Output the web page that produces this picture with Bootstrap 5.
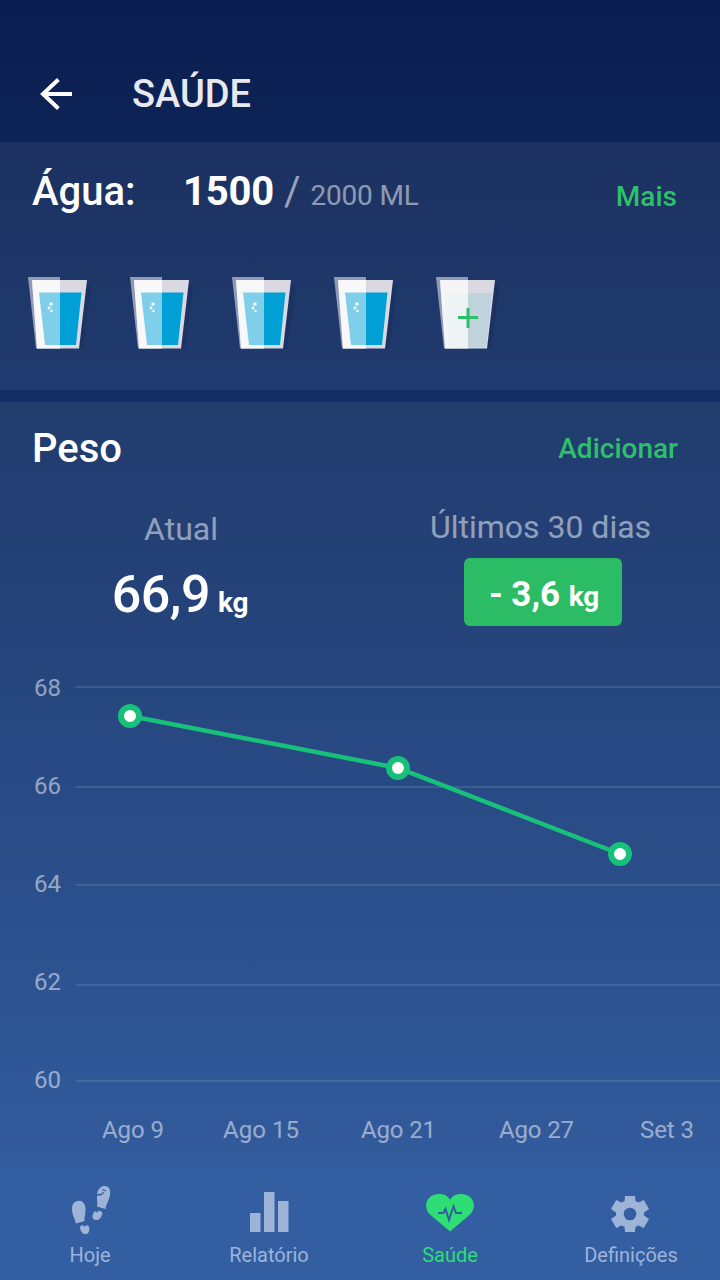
<!DOCTYPE html>
<html lang="pt">
<head>
<meta charset="utf-8">
<meta name="viewport" content="width=device-width, initial-scale=1">
<title>Saúde</title>
<link rel="stylesheet" href="https://cdn.jsdelivr.net/npm/bootstrap@5.3.0/dist/css/bootstrap.min.css">
<style>
body{font-family:Roboto,"Liberation Sans",sans-serif;width:720px;height:1280px;overflow:hidden;background:#142d66;color:#fff;line-height:1}
.app-header{height:142px;padding:46px 0 0 40px;background:linear-gradient(#0a1c50,#0e2456)}
.app-title{font-size:38px;font-weight:500;line-height:96px;margin-left:60px;opacity:.9}
.water{height:248px;margin-bottom:12px;padding:26px 43px 0 28px;background:linear-gradient(#1c3161,#203b6f)}
.weight{height:766px;background:linear-gradient(#213c6d,#233f74 14%,#25447b 31%,#325b9d)}
.heading{font-size:40px;font-weight:500;line-height:48px}
.water-label{width:155px;padding-left:4px}
.total{font-size:40px;font-weight:700;letter-spacing:-.2px}
.slash{font-size:40px;margin-left:10px;opacity:.55}
.goal{font-size:28px;margin-left:10px;letter-spacing:-.2px;opacity:.5}
.action{font-size:28px;line-height:32px;font-weight:500;color:#2cc069;text-decoration:none}
.glasses{gap:36px}
.stat-label{font-size:32px;line-height:40px;opacity:.5}
.current{font-size:52px;font-weight:500;line-height:60px;letter-spacing:-.5px}
.unit{font-size:28px;font-weight:700;letter-spacing:-.2px}
.delta{width:158px;height:68px;border-radius:6px;background:#2dbc66;font-size:35px;font-weight:700;line-height:73px;margin-left:6px}
.axis{font-size:24px;fill:#fff;opacity:.5}
.tabs{height:112px;background:#335fa2;color:#9db4d8;font-size:20px}
.tabs .item{width:180px;padding-top:14px;color:inherit;text-decoration:none}
.tabs .active{color:#2ede74}
.tabs span{line-height:26px;margin-top:4px}
</style>
</head>
<body>
<header class="app-header d-flex">
  <svg width="32" height="32" viewBox="0 0 32 32" style="margin-top:32px" fill="none" stroke="#fff" stroke-width="4"><path d="M32 16H4M18.400 1.500L3 16L18.400 30.500"/></svg>
  <h1 class="app-title mb-0">SAÚDE</h1>
</header>

<svg width="0" height="0" class="position-absolute">
  <defs>
    <g id="cup">
      <path d="M59 6L63 10L55 72H51Z" fill="#132957" opacity=".35"/>
      <path d="M4 3H59L51 71.500H9Z" fill="#dad9e1"/>
    </g>
    <path id="shine" d="M0 0H32V71.500H8Z" fill="#fff"/>
    <g id="full">
      <use href="#cup"/>
      <path d="M4 3H32V71.500H9Z" fill="#fff" opacity=".6"/>
      <path d="M11 15.500H53.500L48 68H17Z" fill="#009fd5"/>
      <use href="#shine" opacity=".5"/>
      <g fill="#fff"><circle cx="23" cy="27" r="1.700"/><circle cx="21" cy="31" r="1.400"/><circle cx="23.500" cy="34" r="1.200"/></g>
    </g>
  </defs>
</svg>

<section class="water">
  <div class="d-flex align-items-baseline" style="height:109px">
    <h2 class="heading water-label mb-0">Água:</h2>
    <span class="total">1500</span><span class="slash">/</span><span class="goal">2000 ML</span>
    <a href="#" class="action ms-auto" style="padding-top:2px;transform:translateY(1px)">Mais</a>
  </div>
  <div class="glasses d-flex">
    <svg width="66" height="74"><use href="#full"/></svg>
    <svg width="66" height="74"><use href="#full"/></svg>
    <svg width="66" height="74"><use href="#full"/></svg>
    <svg width="66" height="74"><use href="#full"/></svg>
    <svg width="66" height="74"><use href="#cup"/><path d="M8 16H56L50 70H13Z" fill="#bfd3dc"/><path d="M4 3H32V71.500H9Z" fill="#fff" opacity=".45"/><use href="#shine" opacity=".5"/><path d="M22 40.500H42M32 31V51" stroke="#2cc069" stroke-width="3"/></svg>
  </div>
</section>

<section class="weight">
  <div class="d-flex justify-content-between align-items-start" style="height:75px;padding:23px 42px 0 32px">
    <h2 class="heading mb-0">Peso</h2>
    <a href="#" class="action" style="margin-top:8px">Adicionar</a>
  </div>
  <div class="row g-0 text-center" style="height:176px;padding-top:30px">
    <div class="col-6">
      <div class="stat-label" style="padding:2px 0 0 2px">Atual</div>
      <div class="current d-flex justify-content-center align-items-baseline" style="padding-top:16px;gap:8px"><span>66,9</span><span class="unit">kg</span></div>
    </div>
    <div class="col-6">
      <div class="stat-label" style="padding-left:1px">Últimos 30 dias</div>
      <div class="delta d-inline-block" style="margin-top:11px"><span style="margin-left:2px">- 3,6</span> <span class="unit">kg</span></div>
    </div>
  </div>
  <svg class="d-block" width="720" height="515" viewBox="0 653 720 515">
    <path d="M76 687H720M76 787H720M76 885H720M76 985H720M76 1081H720" stroke="#fff" stroke-width="2" opacity=".105"/>
    <g class="axis">
      <text x="34" y="696" textLength="27">68</text><text x="34" y="794" textLength="27">66</text><text x="34" y="892" textLength="27">64</text><text x="34" y="990" textLength="27">62</text><text x="34" y="1088" textLength="27">60</text>
      <text x="102" y="1138" textLength="62">Ago 9</text><text x="223" y="1138" textLength="76">Ago 15</text><text x="361" y="1138" textLength="75">Ago 21</text><text x="499" y="1138" textLength="75">Ago 27</text><text x="640" y="1138" textLength="54">Set 3</text>
    </g>
    <path d="M130 716L398 768L620 854" fill="none" stroke="#18c17a" stroke-width="4.500"/>
    <g fill="#fff" stroke="#18c17a" stroke-width="6"><circle cx="130" cy="716" r="9"/><circle cx="398" cy="768" r="9"/><circle cx="620" cy="854" r="9"/></g>
  </svg>
</section>

<nav class="tabs d-flex">
  <a href="#" class="item d-flex flex-column align-items-center">
    <svg width="52" height="56" viewBox="64 1182 52 56" fill="currentColor"><path d="M78 1201C83 1200 86 1205 85.500 1211C85.400 1215 84 1218 84.500 1221L76 1223.500C75 1219 72 1215 72 1209C72 1204 74 1201.500 78 1201ZM80 1226.500L82.500 1225L84 1226.500L88 1225C90 1228 90 1233 86.500 1234C82 1235 80 1230 80 1226.500Z"/><path d="M104 1186C108.500 1185.500 111 1189 110 1195C109 1201 106 1204 105.500 1209L97 1206.500C98 1202 96.500 1199 97 1195C97.500 1190 100 1186.500 104 1186ZM94.500 1211L97 1212.500L99 1210.500L102.500 1212.500C102 1216 100.500 1219.500 97 1220C93 1220.500 91.500 1217 93 1214Z"/><path d="M97 1195L101 1194.500L104 1192.500M102 1189.500L106 1191" stroke="#335fa2" stroke-width="1.300" fill="none"/></svg>
    <span>Hoje</span>
  </a>
  <a href="#" class="item d-flex flex-column align-items-center" style="padding-right:2px">
    <svg width="52" height="56" viewBox="243 1182 52 56" fill="currentColor"><path d="M250 1213H260.500V1232H250ZM264 1192H274.500V1232H264ZM278 1201H288.500V1232H278Z"/></svg>
    <span>Relatório</span>
  </a>
  <a href="#" class="item active d-flex flex-column align-items-center">
    <svg width="52" height="56" viewBox="424 1182 52 56"><path d="M450 1231.500L430 1214.500C422 1206 427 1194 439 1194C444 1194 448 1196 450 1200C452 1196 456 1194 461 1194C473 1194 478 1206 470 1214.500Z" fill="currentColor"/><path d="M438 1213H443.500L445.500 1209L449 1220L453.500 1206L456 1213H462" fill="none" stroke="#335fa2" stroke-width="2"/></svg>
    <span>Saúde</span>
  </a>
  <a href="#" class="item d-flex flex-column align-items-center" style="padding-left:2px">
    <svg width="52" height="56" viewBox="-25 -32 52 56"><g fill="currentColor"><circle r="14"/><path id="tooth" d="M-5 -18H5L5.500 -11V11L5 18H-5L-5.500 11V-11Z"/><use href="#tooth" transform="rotate(60) scale(1.050)"/><use href="#tooth" transform="rotate(120) scale(1.050)"/></g><circle r="6.300" fill="#335fa2"/></svg>
    <span>Definições</span>
  </a>
</nav>
<script src="https://cdn.jsdelivr.net/npm/bootstrap@5.3.0/dist/js/bootstrap.bundle.min.js"></script>
</body>
</html>
